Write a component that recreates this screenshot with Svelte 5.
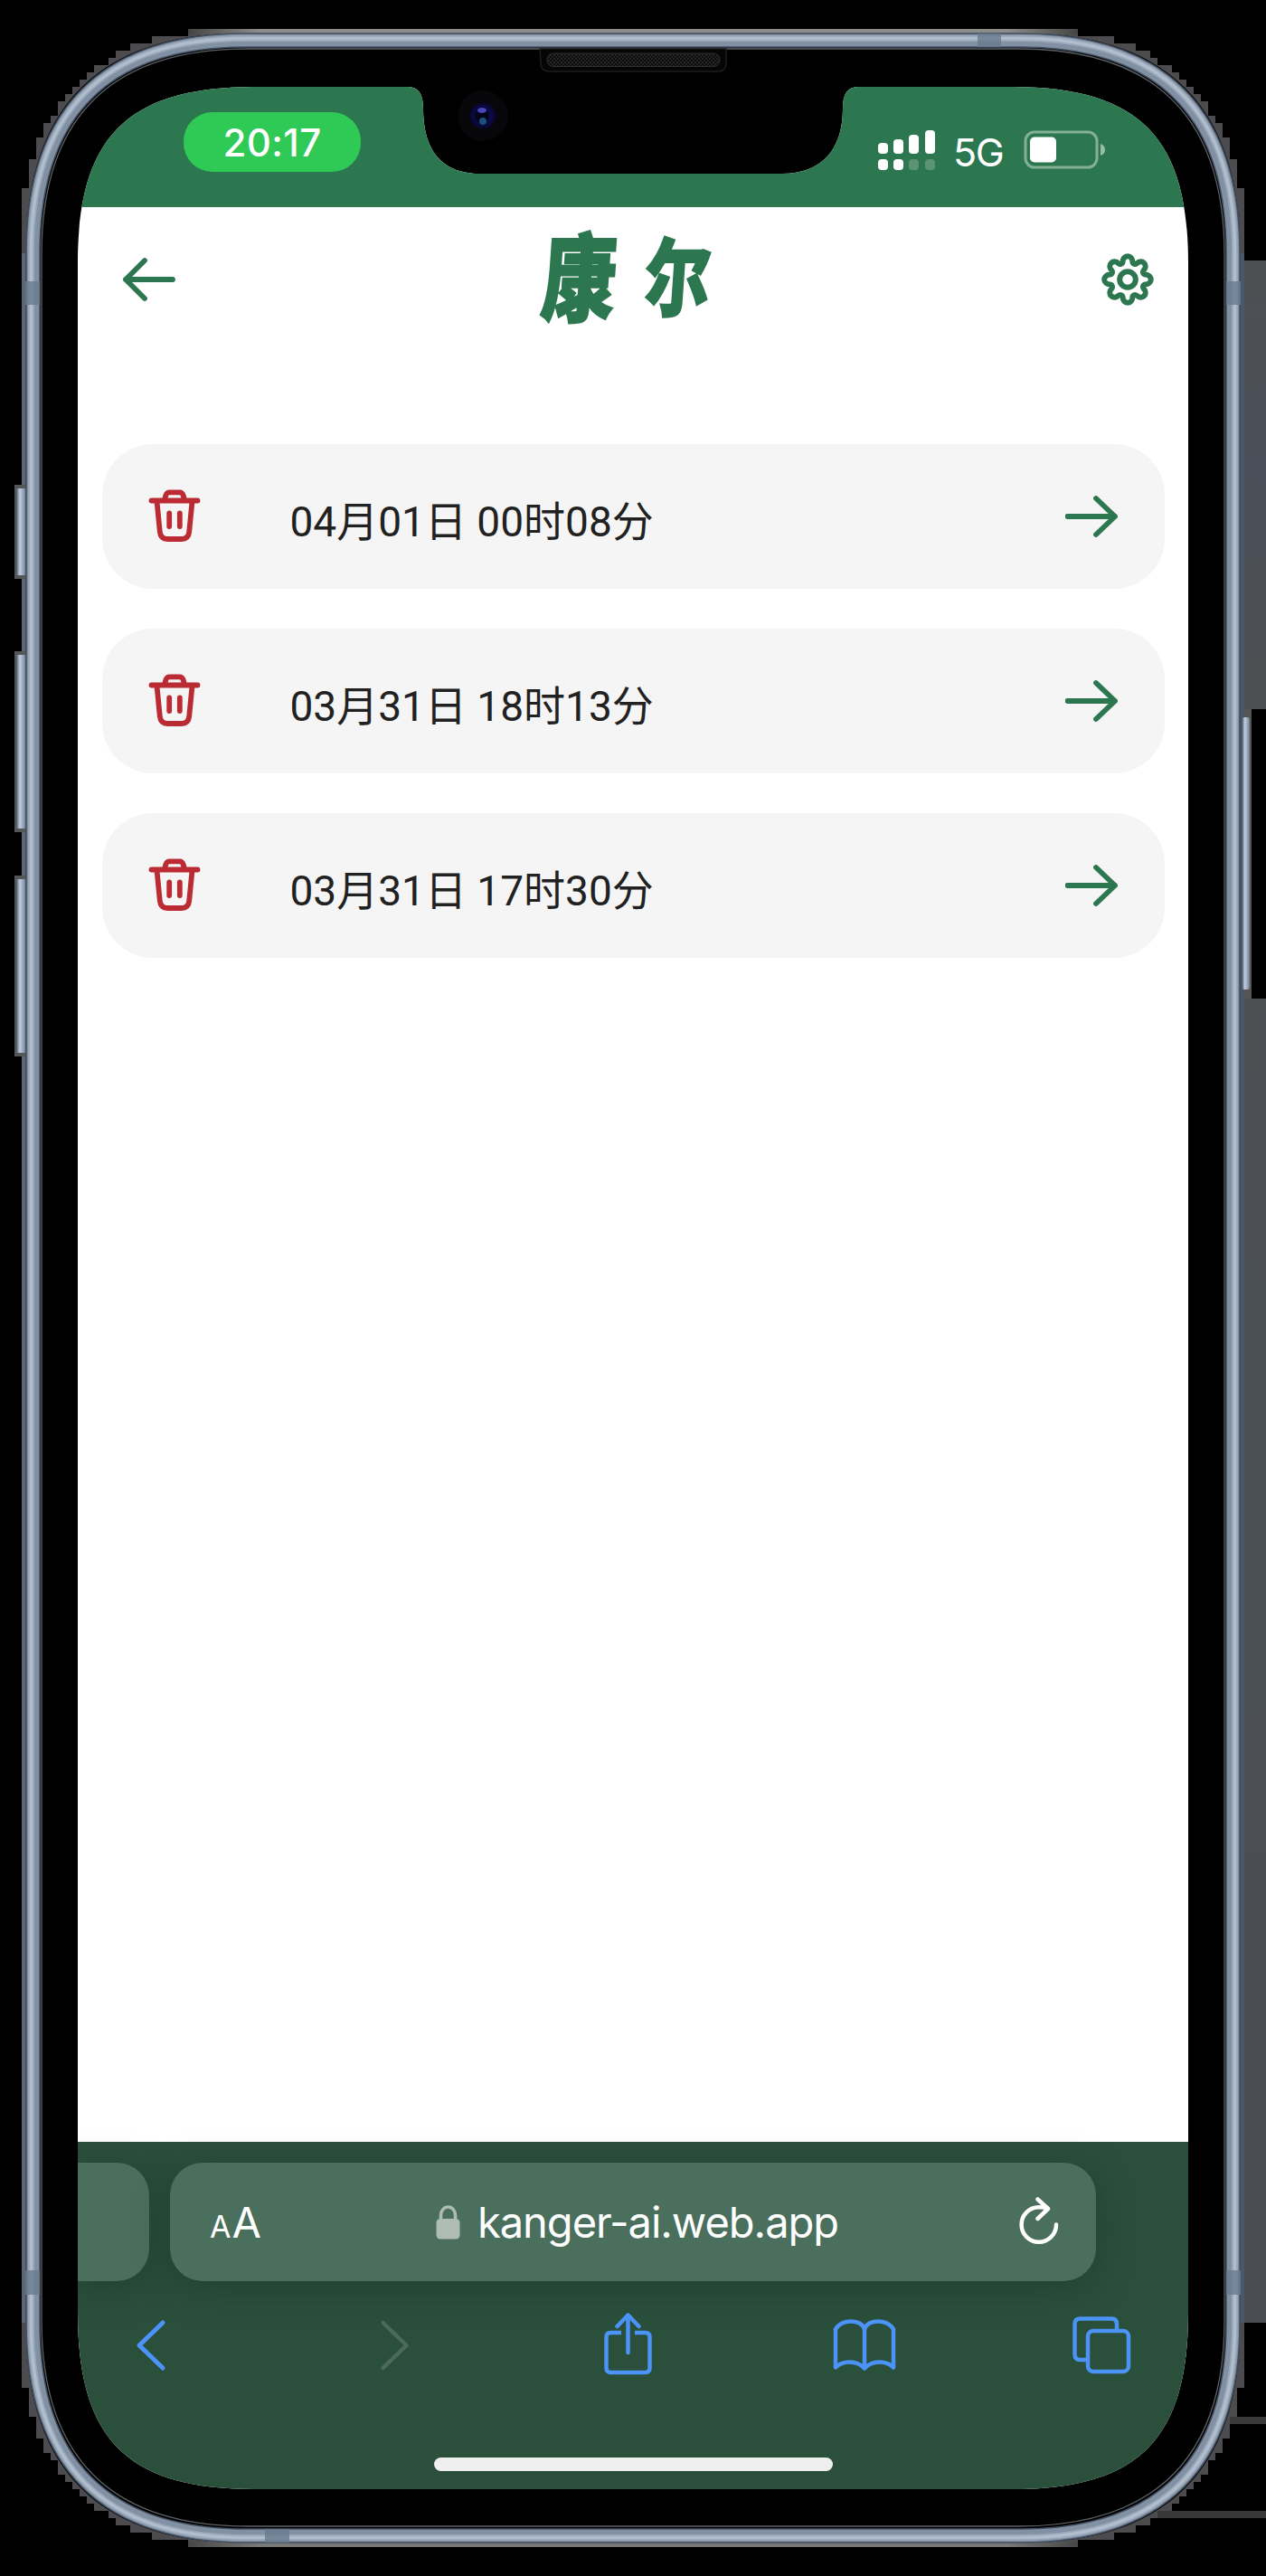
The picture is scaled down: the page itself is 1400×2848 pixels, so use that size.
<script>
  const entries = [
    { id: 1, label: '04月01日 00时08分' },
    { id: 2, label: '03月31日 18时13分' },
    { id: 3, label: '03月31日 17时30分' }
  ];

  const signal = [
    { h: 12, on: true },
    { h: 16, on: true },
    { h: 21, on: false },
    { h: 26, on: false }
  ];

  // Stepped outline around the device: [top y, left x] of the first corner,
  // mirrored into the other three.
  const steps = [
    [32, 208], [40, 168], [48, 144], [56, 128], [64, 120], [72, 104], [80, 96],
    [88, 88], [96, 80], [104, 72], [112, 64], [128, 56], [136, 48], [152, 40],
    [176, 32], [208, 24]
  ];
  const corner = [];
  steps.forEach(([y, x], i) => {
    if (i > 0) corner.push([steps[i - 1][1], y]);
    corner.push([x, y]);
  });
  const fringe = [
    ...corner,
    ...corner.map(([x, y]) => [x, 2848 - y]).reverse(),
    ...corner.map(([x, y]) => [1400 - x, 2848 - y]),
    ...corner.map(([x, y]) => [1400 - x, y]).reverse()
  ].map((p) => p.join(',')).join(' ');

  // Rounded rectangle with continuous corners.
  function squircle(l, t, r, b, R, c) {
    return `M${l},${t + R}C${l},${t + c} ${l + c},${t} ${l + R},${t}H${r - R}` +
      `C${r - c},${t} ${r},${t + c} ${r},${t + R}V${b - R}` +
      `C${r},${b - c} ${r - c},${b} ${r - R},${b}H${l + R}` +
      `C${l + c},${b} ${l},${b - c} ${l},${b - R}Z`;
  }
  const band = squircle(36.5, 44.5, 1363.5, 2803.5, 235, 80);
  const lip = squircle(46, 54, 1354, 2793, 228, 76);
  const bandLight = squircle(34.5, 42.5, 1365.5, 2805.5, 236, 81);

  // Eight round lobes joined by small concave arcs.
  function gear(cx, cy) {
    let d = '';
    for (let k = 0; k < 8; k++) {
      const a = (k * Math.PI) / 4;
      const u = [Math.cos(a), Math.sin(a)];
      const at = (s) => `${(cx + 19.6 * u[0] - s * 5.4 * u[1]).toFixed(2)},${(cy + 19.6 * u[1] + s * 5.4 * u[0]).toFixed(2)}`;
      d += k === 0 ? `M${at(-1)}` : `A2.8,2.8 0 0 0 ${at(-1)}`;
      d += `A5.4,6.2 ${k * 45 + 90} 0 1 ${at(1)}`;
      if (k === 7) {
        d += `A2.8,2.8 0 0 0 ${(cx + 19.6).toFixed(2)},${(cy - 5.4).toFixed(2)}`;
      }
    }
    return d + 'Z';
  }
  const gearPath = gear(30, 30);
</script>

<div class="stage">
  <svg class="device" width="1400" height="2848" viewBox="0 0 1400 2848" aria-hidden="true">
    <defs>
      <linearGradient id="topEdge" x1="0" x2="1" y1="0" y2="0">
        <stop offset="0" stop-color="#444" />
        <stop offset=".08" stop-color="#8c8c88" />
        <stop offset=".92" stop-color="#8c8c88" />
        <stop offset="1" stop-color="#444" />
      </linearGradient>
      <linearGradient id="side" x1="0" x2="0" y1="0" y2="1">
        <stop offset="0" stop-color="#4d5052" />
        <stop offset=".1" stop-color="#4a4e58" />
        <stop offset=".2" stop-color="#4c4f52" />
        <stop offset=".6" stop-color="#4b5054" />
        <stop offset="1" stop-color="#4a4d54" />
      </linearGradient>
      <linearGradient id="button" x1="0" x2="1" y1="0" y2="0">
        <stop offset="0" stop-color="#3d4a5a" />
        <stop offset=".4" stop-color="#c2cedd" />
        <stop offset=".8" stop-color="#8d9cb0" />
        <stop offset="1" stop-color="#6b7a8c" />
      </linearGradient>
      <pattern id="mesh" width="4" height="4" patternUnits="userSpaceOnUse">
        <rect width="4" height="4" fill="#0c0c0c" />
        <rect width="2" height="2" fill="#262626" />
        <rect x="2" y="2" width="2" height="2" fill="#222" />
      </pattern>
      <radialGradient id="lens">
        <stop offset="0" stop-color="#12126a" />
        <stop offset=".6" stop-color="#0b0a4c" />
        <stop offset="1" stop-color="#08061e" />
      </radialGradient>
    </defs>
    <rect x="1368" y="288" width="32" height="2280" fill="url(#side)" />
    <rect x="1374" y="784" width="10" height="320" fill="#555" />
    <rect x="1384" y="784" width="16" height="320" fill="#000" />
    <rect x="1340" y="2672" width="60" height="8" fill="#3a3a3a" />
    <rect x="1270" y="2776" width="130" height="8" fill="#383838" />
    <polygon points={fringe} fill="#4c4c4e" />
    <rect x="208" y="32" width="984" height="6" fill="url(#topEdge)" />
    <rect x="208" y="2810" width="984" height="6" fill="url(#topEdge)" opacity=".7" />
    <rect x="24" y="280" width="4" height="2288" fill="#5c6775" />
    <rect x="1372" y="280" width="4" height="2288" fill="#46586a" />

    {#each [[536, 104], [720, 200], [968, 200]] as [y, h]}
      <rect x="16" y={y} width="12" height={h} fill="#55565a" />
      <rect x="17.5" y={y + 4} width="11" height={h - 8} rx="2" fill="url(#button)" />
    {/each}
    <rect x="1373" y="793" width="9" height="301" rx="3" fill="url(#button)" />

    <path d={squircle(29, 37, 1371, 2811, 237, 82)} fill="#000" />
    <path d={band} fill="none" stroke="#414f60" stroke-width="16.5" />
    <path d={band} fill="none" stroke="#8290a3" stroke-width="13.5" />
    <path d={bandLight} fill="none" stroke="#98a6b8" stroke-width="7" />
    <path d={bandLight} fill="none" stroke="#b0bdcc" stroke-width="3.5" />
    <path d={lip} fill="none" stroke="#5c6065" stroke-width="1.3" />
    <g fill="#6a7b8e" opacity=".8">
      <rect x="28" y="311" width="16" height="26" />
      <rect x="1356" y="311" width="16" height="26" />
      <rect x="28" y="2510" width="16" height="27" />
      <rect x="1356" y="2510" width="16" height="27" />
      <rect x="1081" y="37" width="26" height="15" />
      <rect x="293" y="2796" width="27" height="15" />
    </g>

    <path d="M597,54H803V70Q803,79 793,79H608Q598,79 598,70Z" fill="#050505" stroke="#1e1e1e" stroke-width="1.5" />
    <rect x="605" y="59" width="191" height="14.5" rx="7" fill="url(#mesh)" stroke="#303030" stroke-width="1" />
    <circle cx="534" cy="128" r="28" fill="#070609" />
    <circle cx="534" cy="128" r="15" fill="url(#lens)" />
    <circle cx="533" cy="128" r="8" fill="#050418" />
    <ellipse cx="533" cy="122" rx="5" ry="3" fill="#4646b4" />
    <ellipse cx="534" cy="134" rx="4" ry="4" fill="#1c5078" />
  </svg>

  <main class="screen">
    <header class="status">
      <span class="clock">20:17</span>
      <div class="radios">
        <div class="signal">
          {#each signal as bar}
            <span class="col">
              <i class="bar" style="height: {bar.h}px"></i>
              <i class="dot" class:off={!bar.on}></i>
            </span>
          {/each}
        </div>
        <span class="network">5G</span>
        <svg class="battery" width="92" height="44" viewBox="0 0 92 44">
          <rect x="2" y="2" width="79" height="39" rx="10" fill="none" stroke="#fff" stroke-opacity=".42" stroke-width="3" />
          <rect x="7" y="7.500" width="29" height="28" rx="5" fill="#fff" />
          <path d="M85,15q5,1.500 5,6.500t-5,6.500z" fill="#fff" fill-opacity=".5" />
        </svg>
      </div>
    </header>

    <nav class="top">
      <svg width="64" height="60" viewBox="0 0 64 60" class="line green">
        <path d="M57,30H5M26,9L5,30L26,51" />
      </svg>
      <h1><span>康</span><span class="second">尔</span></h1>
      <svg width="60" height="60" viewBox="0 0 60 60" class="line green gear">
        <path d={gearPath} />
        <circle cx="30" cy="30" r="8.800" />
      </svg>
    </nav>

    <ul class="list">
      {#each entries as entry (entry.id)}
        <li>
          <svg width="64" height="64" viewBox="0 0 64 64" class="line red">
            <path d="M6.500,14.500H57.500" />
            <path d="M21,13.500l1.300,-4.600q1,-3.500 4.200,-3.500h11q3.200,0 4.200,3.500l1.300,4.600" />
            <path d="M12.500,15.500l3.300,33.500q.8,8 8.500,8h15.400q7.700,0 8.500,-8l3.300,-33.500" />
            <path d="M26.200,28.500v14.500M37.800,28.500v14.500" />
          </svg>
          <span class="label">{entry.label}</span>
          <svg width="64" height="60" viewBox="0 0 64 60" class="line green">
            <path d="M2.500,30H55M34,10L55,30L34,50" />
          </svg>
        </li>
      {/each}
    </ul>

    <footer class="browser">
      <div class="tabs">
        <div class="tab previous"></div>
        <div class="tab address">
          <span class="reader"><small>A</small>A</span>
          <span class="site">
            <svg width="27" height="38" viewBox="0 0 27 38">
              <path d="M5.500,17V11a8,9 0 0 1 16,0v6" fill="none" stroke="#aebcb5" stroke-width="3.500" />
              <rect x=".5" y="15" width="26" height="22.500" rx="4.500" fill="#aebcb5" />
            </svg>
            <span class="url">kanger-ai.web.app</span>
          </span>
          <svg class="reload" width="48" height="56" viewBox="0 0 48 56">
            <path d="M42,30.500a19.200,19.200 0 1 1 -19.200,-19.200q5,0 9.500,1" />
            <path d="M21.500,2.500L33,13L21.500,24" />
          </svg>
        </div>
      </div>
      <div class="tools">
        <svg width="72" height="72" viewBox="0 0 72 72"><path d="M49,11L23,36L49,61" stroke-width="5" /></svg>
        <svg class="dim" width="72" height="72" viewBox="0 0 72 72"><path d="M29.500,11L55.500,36L29.500,61" /></svg>
        <svg width="72" height="72" viewBox="0 0 72 72">
          <path d="M30,22H18.500q-5,0 -5,5V61q0,5 5,5H56.500q5,0 5,-5V27q0,-5 -5,-5H45" stroke-linecap="butt" />
          <path d="M37.500,44V3M25.500,15L37.500,2.500L49.500,15" />
        </svg>
        <svg width="72" height="72" viewBox="0 0 72 72">
          <path d="M37,18V61.500M37,18C33,6.500 12,6.500 5,18V60.500C12,53 28,51.500 37,61.500C46,51.500 62,53 69,60.500V18C62,6.500 41,6.500 37,18" />
        </svg>
        <svg width="72" height="72" viewBox="0 0 72 72">
          <path d="M20,52H12.500q-6,0 -6,-6V12.500q0,-6 6,-6H47q6,0 6,6V19" stroke-linecap="butt" />
          <rect x="21" y="20" width="45" height="45" rx="6" />
        </svg>
      </div>
      <div class="home"></div>
    </footer>
  </main>
</div>

<style>
  :global(body) {
    margin: 0;
    background: #000;
  }
  .stage {
    position: relative;
    box-sizing: border-box;
    width: 1400px;
    height: 2848px;
    padding: 96px 86px;
    background: #000;
    overflow: hidden;
    font-family: Inter, 'Noto Sans CJK SC', sans-serif;
  }
  .device {
    position: absolute;
    inset: 0;
  }
  .screen {
    position: relative;
    display: flex;
    flex-direction: column;
    width: 1228px;
    height: 2656px;
    background: #fff;
    clip-path: path('M0,195C0,55 55,0 195,0H365C377,0 382,8 382,24C382,72 404,96 445,96H779C822,96 846,70 846,24C846,8 851,0 863,0H1033C1173,0 1228,55 1228,195V2461C1228,2601 1173,2656 1033,2656H195C55,2656 0,2601 0,2461Z');
  }
  .status {
    display: flex;
    justify-content: space-between;
    align-items: flex-start;
    box-sizing: border-box;
    height: 132.500px;
    padding: 28px 90px 0 117px;
    background: #2c774f;
    color: #fff;
  }
  .clock {
    width: 196px;
    height: 66px;
    border-radius: 32px;
    background: #2fca55;
    font-size: 42px;
    font-weight: 500;
    line-height: 67px;
    text-align: center;
    letter-spacing: .4px;
  }
  .radios {
    display: flex;
    align-items: flex-end;
    padding-top: 20px;
  }
  .signal {
    display: flex;
    align-items: flex-end;
    gap: 6.200px;
    width: 64px;
    margin-right: 19px;
  }
  .col {
    display: flex;
    flex-direction: column;
    gap: 6px;
    width: 11px;
  }
  .bar,
  .dot {
    border-radius: 4px;
    background: #fff;
  }
  .dot {
    height: 12px;
  }
  .dot.off {
    opacity: .22;
  }
  .network {
    width: 78px;
    font-size: 43px;
    line-height: 40px;
    letter-spacing: -1.500px;
  }
  .top {
    display: flex;
    justify-content: space-between;
    align-items: center;
    height: 161px;
    padding: 0 37px 0 48px;
  }
  .line {
    flex: none;
    fill: none;
    stroke-width: 5.800;
    stroke-linecap: round;
    stroke-linejoin: round;
  }
  .green {
    stroke: #2c774f;
  }
  .red {
    stroke: #bb2b33;
  }
  .gear {
    stroke-width: 6;
  }
  h1 {
    display: flex;
    gap: 14px;
    margin: 0 0 0 -20px;
    color: #2c774f;
    font: 900 98px/120px 'Noto Sans CJK SC', sans-serif;
    -webkit-text-stroke: 2px #2c774f;
    transform: translateY(-8px) skewX(-4deg);
  }
  h1 span {
    transform: scale(.84, 1.080);
  }
  h1 .second {
    transform: translateX(-3px) scale(.74, .96);
  }
  .list {
    display: flex;
    flex-direction: column;
    gap: 44px;
    margin: 0;
    padding: 101px 26.500px 0;
    list-style: none;
  }
  .list li {
    display: flex;
    align-items: center;
    box-sizing: border-box;
    height: 160px;
    padding: 0 46px 0 48px;
    border-radius: 56px;
    background: #f5f5f5;
  }
  .label {
    flex: 1;
    padding: 12px 0 0 96px;
    color: #212121;
    font: 400 46px/60px Roboto, 'Noto Sans CJK SC', sans-serif;
  }
  .browser {
    display: flex;
    flex-direction: column;
    align-items: center;
    height: 384px;
    margin-top: auto;
    background: #2a4f3b;
  }
  .tabs {
    display: flex;
    gap: 23px;
    width: 100%;
    padding-top: 23px;
  }
  .tab {
    height: 131px;
    background: #4a6f5c;
    box-shadow: 0 8px 36px rgba(20, 56, 36, .5);
  }
  .previous {
    width: 79px;
    border-radius: 0 36px 36px 0;
  }
  .address {
    display: flex;
    align-items: center;
    justify-content: space-between;
    box-sizing: border-box;
    width: 1024px;
    padding: 0 38px 0 44px;
    border-radius: 36px;
    color: #fff;
  }
  .reader {
    width: 70px;
    font-size: 47px;
    letter-spacing: -1px;
  }
  .reader small {
    font-size: 34px;
    letter-spacing: 1px;
  }
  .site {
    display: flex;
    align-items: center;
    gap: 19px;
    margin-left: -19px;
  }
  .url {
    font-size: 47px;
    line-height: 60px;
    letter-spacing: -1px;
  }
  .reload {
    fill: none;
    stroke: #fff;
    stroke-width: 4.500;
    stroke-linecap: round;
    stroke-linejoin: round;
  }
  .tools {
    display: flex;
    justify-content: space-between;
    box-sizing: border-box;
    width: 100%;
    padding: 35px 60px 0 45px;
  }
  .tools svg {
    fill: none;
    stroke: #4c93f8;
    stroke-width: 4.500;
    stroke-linecap: round;
    stroke-linejoin: round;
  }
  .tools .dim {
    stroke: #4b6a58;
  }
  .home {
    width: 441px;
    height: 15px;
    margin-top: 88px;
    border-radius: 8px;
    background: #efefef;
  }
</style>
